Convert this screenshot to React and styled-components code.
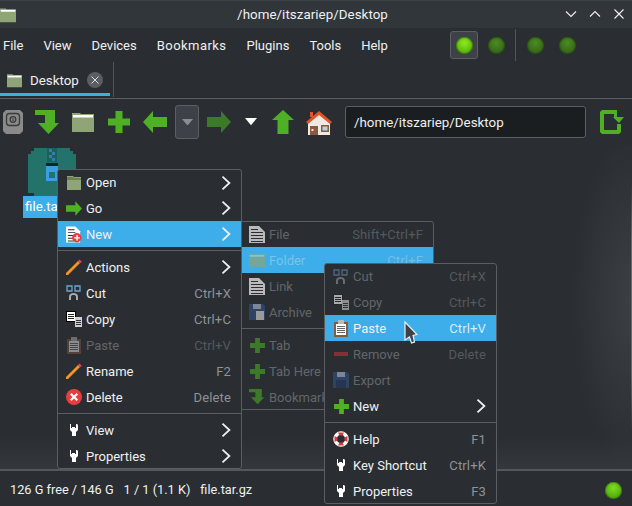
import React from 'react'
import styled, { createGlobalStyle } from 'styled-components'

const GREEN = '#4fb026'
const DIM_GREEN = '#3c7a2a'

const Global = createGlobalStyle`
html,body{margin:0;padding:0;background:#2a2e32;}
*{box-sizing:border-box;}
`

const FolderIcon = ({ size = 22, faded }) => (
  <svg width={size} height={size} viewBox="0 0 22 22" opacity={faded ? 0.7 : 1}>
    <path d="M0 2h8l1 1h13v18H0z" fill="#8fa477" />
    <path d="M1 4h20v2.500H1z" fill={faded ? '#9fd0c8' : '#fff'} />
  </svg>
)
const OpenFolder = () => (
  <svg width="16" height="16" viewBox="0 0 16 16">
    <path d="M1 1h6l1 1h7v13H1z" fill="#8fa477" />
    <path d="M1 2h6l1 1h7v2H1z" fill="#6c8052" />
  </svg>
)
const ArrowRight = ({ color = GREEN, w = 24, h = 22 }) => (
  <svg width={w} height={h} viewBox="0 0 24 22">
    <path d="M0 6h14V0l10 11-10 11v-6H0z" fill={color} />
  </svg>
)
const ArrowLeft = () => (
  <svg width="24" height="22" viewBox="0 0 24 22">
    <path d="M24 6H10V0L0 11l10 11v-6h14z" fill={GREEN} />
  </svg>
)
const ArrowUp = () => (
  <svg width="22" height="24" viewBox="0 0 22 24">
    <path d="M5.500 24V10H0L11 0l11 10h-5.500v14z" fill={GREEN} />
  </svg>
)
const TurnDown = ({ size = 25, color = GREEN }) => (
  <svg width={size} height={size} viewBox="0 0 25 25">
    <path d="M0 0h20v13h4L13.500 24 3 13h7V5H0z" fill={color} />
  </svg>
)
const Plus = ({ size = 22, color = GREEN }) => (
  <svg width={size} height={size} viewBox="0 0 22 22">
    <path d="M7.500 0h7v7.500H22v7h-7.500V22h-7v-7.500H0v-7h7.500z" fill={color} />
  </svg>
)
const DiskIcon = () => (
  <svg width="20" height="24" viewBox="0 0 20 24">
    <path d="M3 0h14l3 3v18l-3 3H3l-3-3V3z" fill="#8a8a8a" />
    <rect x="3.500" y="3.500" width="13" height="12" rx="3" fill="none" stroke="#3a3a3a" strokeWidth="1.300" />
    <circle cx="10" cy="9.500" r="2.800" fill="none" stroke="#3a3a3a" strokeWidth="1.300" />
    <path d="M9.500 8h1v3h-1z" fill="#3a3a3a" />
  </svg>
)
const HomeIcon = () => (
  <svg width="26" height="25" viewBox="0 0 26 25">
    <path d="M13 3l11 9v13H2V12z" fill="#eee9e2" />
    <path d="M4 2h3v5H4z" fill="#e0562a" />
    <path d="M0 12L13 1l13 11-2 2L13 5 2 14z" fill="#e0562a" />
    <path d="M4 16h8v9H4z" fill="#8c5a3c" />
    <path d="M15 15h8v7h-8z" fill="#8c5a3c" />
    <path d="M16.500 16.500h5v4h-5z" fill="#a9d8ee" />
    <path d="M5.500 19h2v2h-2z" fill="#eee9e2" />
  </svg>
)
const ReloadIcon = () => (
  <svg width="24" height="24" viewBox="0 0 24 24">
    <path d="M2 0h15v7h7l-5 6-6-6h1V4H4v16h13v-6h4v8l-2 2H2l-2-2V2z" fill={GREEN} />
  </svg>
)
const PageLines = ({ color = '#bbb' }) => (
  <svg width="16" height="17" viewBox="0 0 16 17">
    <path d="M0 0h10l6 6v11H0z" fill={color} />
    <path d="M2 3h7v1H2zM2 6h12v1H2zM2 9h12v1H2zM2 12h12v1H2zM2 15h12v1H2z" fill="#2a2e32" />
  </svg>
)
const NewDocIcon = () => (
  <svg width="17" height="17" viewBox="0 0 17 17">
    <path d="M0 0h10l5 5v12H0z" fill="#fff" />
    <path d="M2 3h7v1H2zM2 6h8v1H2zM2 9h6v1H2zM2 12h6v1H2zM2 15h7v1H2z" fill="#2a2e32" />
    <circle cx="11.500" cy="12" r="5" fill="#e93d3d" />
    <path d="M11 9h1.500v2.300h2.300v1.500h-2.300V15H11v-2.200H8.700v-1.500H11z" fill="#fff" />
  </svg>
)
const PencilIcon = () => (
  <svg width="16" height="16" viewBox="0 0 16 16">
    <path d="M0 14L12 2l2 2L2 16H0z" fill="#f7941e" />
    <path d="M12 2l1.500-1.500L16 3l-2 1z" fill="#ee3a7a" />
  </svg>
)
const ScissorsIcon = ({ faded }) => (
  <svg width="16" height="16" viewBox="0 0 16 16" opacity={faded ? 0.5 : 1}>
    <path d="M1 1h5v5H1zM9 1h5v5H9z" fill="none" stroke="#6aa6cf" strokeWidth="1.300" />
    <path d="M3 15v-3c0-3 2-4 4.500-4s4.500 1 4.500 4v3h-2v-3c0-1.500-1-2-2.500-2S5 10.500 5 12v3z" fill="#aaa" />
  </svg>
)
const CopyIcon = ({ faded }) => (
  <svg width="16" height="16" viewBox="0 0 16 16" opacity={faded ? 0.6 : 1}>
    <path d="M0 0h10v11H0z" fill={faded ? '#222' : '#000'} />
    <path d="M1 1h8v9H1z" fill="#fff" />
    <path d="M2 3h6v1H2zM2 5h6v1H2zM2 7h6v1H2z" fill="#222" />
    <path d="M9 6h7v10H9z" fill="#cfcfcf" />
    <path d="M10 9h5v1h-5zM10 11h5v1h-5zM10 13h5v1h-5z" fill="#333" />
  </svg>
)
const ClipIcon = ({ faded }) => (
  <svg width="16" height="17" viewBox="0 0 16 17" opacity={faded ? 0.45 : 1}>
    <path d="M1 2h14v15H1z" fill="#8a5a40" />
    <path d="M3 4h10v11H3z" fill="#fff" />
    <path d="M5 0h6v4H5z" fill="#bbb" />
    <path d="M4 6h8v1H4zM4 8h8v1H4zM4 10h8v1H4zM4 12h8v1H4z" fill="#666" />
  </svg>
)
const DeleteIcon = () => (
  <svg width="16" height="16" viewBox="0 0 16 16">
    <circle cx="8" cy="8" r="8" fill="#e93d3d" />
    <path d="M4 5.500L5.500 4 8 6.500 10.500 4 12 5.500 9.500 8l2.500 2.500-1.500 1.500L8 9.500 5.500 12 4 10.500 6.500 8z" fill="#fff" />
  </svg>
)
const WrenchIcon = () => (
  <svg width="16" height="16" viewBox="0 0 16 16">
    <path d="M4 2h1v4h1v-1h3v1h1V2h1l1 1v5l-2 2v4H6v-4L4 8z" fill="#fff" />
  </svg>
)
const FloppyIcon = ({ badge }) => (
  <svg width="16" height="16" viewBox="0 0 16 16">
    <path d="M0 0h14l2 2v14H0z" fill="#2f4363" />
    <path d="M4 0h8v5H4z" fill="#7c8696" />
    {badge ? <path d="M7 7h8v9H7z" fill="#9a9a9a" /> : <path d="M3 8h10v8H3z" fill="#263650" />}
  </svg>
)
const MinusIcon = () => (
  <svg width="16" height="16" viewBox="0 0 16 16">
    <path d="M1 6h14v4H1z" fill="#843036" />
  </svg>
)
const HelpIcon = () => (
  <svg width="16" height="16" viewBox="0 0 16 16">
    <circle cx="8" cy="8" r="6" fill="none" stroke="#fff" strokeWidth="3.500" />
    <path d="M5 1.500h6l-1.500 3h-3zM5 14.500h6l-1.500-3h-3zM1.500 5v6l3-1.500v-3zM14.500 5v6l-3-1.500v-3z" fill="#d63c3c" />
  </svg>
)
const Chevron = ({ size = 16 }) => (
  <svg width={size * 0.62} height={size} viewBox="0 0 10 16">
    <path d="M1.500 1.500L8.500 8l-7 6.500" fill="none" stroke="#eff0f1" strokeWidth="1.800" />
  </svg>
)
const Caret = ({ w = 12, color = '#fff' }) => (
  <svg width={w} height={w * 0.6} viewBox="0 0 10 6">
    <path d="M0 0h10L5 6z" fill={color} />
  </svg>
)
const WinGlyph = ({ d }) => (
  <svg width="12" height="12" viewBox="0 0 12 12">
    <path d={d} fill="none" stroke="#eff0f1" strokeWidth="1.100" />
  </svg>
)
const ArchiveIcon = () => (
  <svg width="48" height="48" viewBox="0 0 48 48">
    <path d="M6 0h36v3h3v3h3v39h-6v3H6v-3H0V6h3V3h3z" fill="#23736b" />
    <path d="M19 0h10v14H19z" fill="#1d5f59" />
    <path d="M21 1h3v3h-3zM24 4h3v3h-3zM21 7h3v3h-3zM24 10h3v3h-3z" fill="#2f7fb5" />
    <path d="M18 15h12v3H18z" fill="#10232e" />
    <path d="M18 18h12v15H18z" fill="#3b9ede" />
    <path d="M21 24h6v6h-6z" fill="#23736b" />
  </svg>
)
const PointerIcon = () => (
  <svg width="14" height="23" viewBox="0 0 14 23">
    <path d="M1 1l12 12.500-4 1 1.500 6.500-3 1-2-6-4.500 3z" fill="#3e4146" stroke="#eff0f1" strokeWidth="1.200" />
  </svg>
)

const items1 = [
  { label: 'Open', icon: <OpenFolder />, sub: true },
  { label: 'Go', icon: <ArrowRight w={16} h={15} />, sub: true },
  { label: 'New', icon: <NewDocIcon />, sub: true, active: true },
  'sep',
  { label: 'Actions', icon: <PencilIcon />, sub: true },
  { label: 'Cut', icon: <ScissorsIcon />, key: 'Ctrl+X' },
  { label: 'Copy', icon: <CopyIcon />, key: 'Ctrl+C' },
  { label: 'Paste', icon: <ClipIcon faded />, key: 'Ctrl+V', off: true },
  { label: 'Rename', icon: <PencilIcon />, key: 'F2' },
  { label: 'Delete', icon: <DeleteIcon />, key: 'Delete' },
  'sep',
  { label: 'View', icon: <WrenchIcon />, sub: true },
  { label: 'Properties', icon: <WrenchIcon />, sub: true },
]
const items2 = [
  { label: 'File', icon: <PageLines />, key: 'Shift+Ctrl+F', off: true },
  { label: 'Folder', icon: <FolderIcon size={16} faded />, key: 'Ctrl+F', off: true, active: true },
  { label: 'Link', icon: <PageLines />, off: true },
  { label: 'Archive', icon: <FloppyIcon badge />, off: true },
  'sep',
  { label: 'Tab', icon: <Plus size={15} color={DIM_GREEN} />, off: true },
  { label: 'Tab Here', icon: <Plus size={15} color={DIM_GREEN} />, off: true },
  { label: 'Bookmark', icon: <TurnDown size={16} color={DIM_GREEN} />, off: true },
]
const items3 = [
  { label: 'Cut', icon: <ScissorsIcon faded />, key: 'Ctrl+X', off: true },
  { label: 'Copy', icon: <CopyIcon faded />, key: 'Ctrl+C', off: true },
  { label: 'Paste', icon: <ClipIcon />, key: 'Ctrl+V', active: true },
  { label: 'Remove', icon: <MinusIcon />, key: 'Delete', off: true },
  { label: 'Export', icon: <FloppyIcon />, off: true },
  { label: 'New', icon: <Plus size={15} />, sub: true },
  'sep',
  { label: 'Help', icon: <HelpIcon />, key: 'F1' },
  { label: 'Key Shortcut', icon: <WrenchIcon />, key: 'Ctrl+K' },
  { label: 'Properties', icon: <WrenchIcon />, key: 'F3' },
]

const Menu = ({ items, $x, $y, $w }) => (
  <MenuBox $x={$x} $y={$y} $w={$w}>
    {items.map((it, i) =>
      it === 'sep' ? (
        <MenuSep key={i} />
      ) : (
        <MenuRow key={i} $active={it.active} $off={it.off}>
          <MenuIcon>{it.icon}</MenuIcon>
          <MenuLabel>{it.label}</MenuLabel>
          {it.key && <MenuKey $off={it.off} $active={it.active}>{it.key}</MenuKey>}
          {it.sub && <Chevron />}
        </MenuRow>
      )
    )}
  </MenuBox>
)

export default function App() {
  return (
    <Window>
      <Global />
      <TitleBar>
        <TitleIcon><FolderIcon size={16} /></TitleIcon>
        <TitleText>/home/itszariep/Desktop</TitleText>
        <WinButtons>
          <WinGlyph d="M1 3.500l5 5 5-5" />
          <WinGlyph d="M1 8.500l5-5 5 5" />
          <WinGlyph d="M1.500 1.500l9 9m0-9l-9 9" />
        </WinButtons>
      </TitleBar>
      <MenuBar>
        <MenuItems>
          {['File', 'View', 'Devices', 'Bookmarks', 'Plugins', 'Tools', 'Help'].map((m) => (
            <TopItem key={m} $wide={m === 'Bookmarks'}>{m}</TopItem>
          ))}
        </MenuItems>
        <Leds>
          <LedButton><Led $on /></LedButton>
          <LedSlot $ml={2}><Led /></LedSlot>
          <LedDivider />
          <LedSlot><Led /></LedSlot>
          <LedSlot><Led /></LedSlot>
        </Leds>
      </MenuBar>
      <TabBar>
        <Tab>
          <FolderIcon size={15} />
          <TabText>Desktop</TabText>
          <TabClose>
            <svg width="8" height="8" viewBox="0 0 8 8">
              <path d="M.5.500l7 7m0-7l-7 7" stroke="#ddd" strokeWidth="1" fill="none" />
            </svg>
          </TabClose>
        </Tab>
      </TabBar>
      <Toolbar>
        <ToolSlot $w={26}><DiskIcon /></ToolSlot>
        <ToolSlot $w={35} $ml={4}><TurnDown /></ToolSlot>
        <ToolSlot $w={36}><FolderIcon size={22} /></ToolSlot>
        <ToolSlot $w={36}><Plus /></ToolSlot>
        <ToolSlot $w={36}><ArrowLeft /></ToolSlot>
        <DropButton><Caret w={11} color="#8a8d91" /></DropButton>
        <ToolSlot $w={40}><ArrowRight color={DIM_GREEN} /></ToolSlot>
        <ToolSlot $w={24}><Caret /></ToolSlot>
        <ToolSlot $w={40}><ArrowUp /></ToolSlot>
        <ToolSlot $w={30} $ml={1}><HomeIcon /></ToolSlot>
        <PathInput>/home/itszariep/Desktop</PathInput>
        <ToolSlot $w={52}><ReloadIcon /></ToolSlot>
      </Toolbar>
      <Canvas>
        <FileItem>
          <ArchiveIcon />
          <FileName>file.tar.gz</FileName>
        </FileItem>
      </Canvas>
      <StatusBar>
        <span>126 G free / 146 G</span>
        <span>1 / 1 (1.1 K)</span>
        <span>file.tar.gz</span>
        <StatusLed />
      </StatusBar>
      <Menu items={items2} $x={240} $y={221} $w={194} />
      <Menu items={items1} $x={57} $y={169} $w={185} />
      <Menu items={items3} $x={324} $y={263} $w={173} />
      <Pointer><PointerIcon /></Pointer>
    </Window>
  )
}

const Window = styled.div`
position:relative;
width:632px;
height:506px;
overflow:hidden;
display:flex;
flex-direction:column;
background:#2a2e32;
color:#eff0f1;
font-family:"Roboto","Noto Sans",sans-serif;
font-size:13.33px;
`
const TitleBar = styled.div`
height:28px;
flex:none;
display:flex;
align-items:center;
justify-content:center;
position:relative;
background:#31363b;
border-top:1px solid #3d4249;
`
const TitleIcon = styled.div`
position:absolute;
left:0;
top:6px;
display:flex;
`
const TitleText = styled.div`
letter-spacing:.05px;
margin-right:7px;
`
const WinButtons = styled.div`
position:absolute;
right:7px;
top:7px;
display:flex;
gap:12px;
`
const MenuBar = styled.div`
height:34px;
flex:none;
display:flex;
align-items:center;
justify-content:space-between;
padding:0 49px 0 3px;
background:#2a2e32;
`
const MenuItems = styled.div`
display:flex;
gap:20px;
`
const TopItem = styled.span`
font-size:13px;
letter-spacing:${(p) => (p.$wide ? '.45px' : '0')};
`
const Leds = styled.div`
display:flex;
align-items:center;
`
const LedButton = styled.div`
width:28px;
height:28px;
display:flex;
align-items:center;
justify-content:center;
background:#3e4248;
border:1px solid #5b5f64;
border-radius:3px;
`
const LedSlot = styled.div`
width:32px;
height:28px;
margin-left:${(p) => p.$ml || 0}px;
display:flex;
align-items:center;
justify-content:center;
`
const LedDivider = styled.div`
width:1px;
height:32px;
background:#50555a;
margin:0 3px;
`
const Led = styled.div`
width:17px;
height:17px;
border-radius:50%;
box-shadow:inset 0 0 1px 1px rgba(20,50,5,.45);
background:${(p) => (p.$on ? 'radial-gradient(circle at 50% 35%,#8fe820,#57b80a 70%)' : 'radial-gradient(circle at 50% 35%,#4d8a22,#35651a 75%)')};
`
const TabBar = styled.div`
height:37px;
flex:none;
display:flex;
background:#2a2e32;
border-bottom:1px solid #5a5d61;
`
const Tab = styled.div`
width:110px;
height:34px;
display:flex;
align-items:center;
padding:5px 0 0 7px;
border-bottom:3px solid #3daee9;
margin-right:3px;
position:relative;
&::after{
content:"";
position:absolute;
right:-4px;
top:0;
width:1px;
height:35px;
background:#50555a;
}
`
const TabText = styled.span`
margin-left:8px;
`
const TabClose = styled.div`
width:16px;
height:16px;
margin-left:8px;
border-radius:50%;
background:#5a5d61;
display:flex;
align-items:center;
justify-content:center;
`
const Toolbar = styled.div`
height:46px;
flex:none;
display:flex;
align-items:center;
`
const ToolSlot = styled.div`
width:${(p) => p.$w}px;
margin-left:${(p) => p.$ml || 0}px;
flex:none;
display:flex;
align-items:center;
justify-content:center;
`
const DropButton = styled.div`
width:24px;
height:34px;
flex:none;
display:flex;
align-items:center;
justify-content:center;
background:#3e4248;
border:1px solid #5b5f64;
border-radius:3px;
margin-left:2px;
`
const PathInput = styled.div`
width:241px;
height:32px;
flex:none;
margin-left:11px;
padding-left:8px;
display:flex;
align-items:center;
background:#1b1e20;
border:1px solid #5b5f64;
border-radius:3px;
`
const Canvas = styled.div`
flex:1;
padding:3px 0 0 23px;
background:
  linear-gradient(to bottom,transparent 12%,#686b6f 30%,#686b6f 70%,transparent 88%) right / 1px 100% no-repeat,
  radial-gradient(ellipse 60px 170px at 100% 48%,#3c4044,transparent),
  linear-gradient(to bottom,transparent 90%,#34383c),
  #2a2e32;
`
const FileItem = styled.div`
width:58px;
display:flex;
flex-direction:column;
align-items:center;
`
const FileName = styled.div`
width:58px;
height:22px;
line-height:22px;
padding-left:2px;
background:#3daee9;
color:#fff;
white-space:nowrap;
overflow:hidden;
`
const StatusBar = styled.div`
height:37px;
flex:none;
display:flex;
align-items:center;
gap:10px;
padding:2px 0 0 10px;
position:relative;
font-size:12.75px;
background:#2a2e32;
border-top:2px solid #54575b;
`
const StatusLed = styled.div`
position:absolute;
right:10px;
top:11px;
width:17px;
height:17px;
border-radius:50%;
box-shadow:inset 0 0 1px 1px rgba(20,50,5,.35);
background:radial-gradient(circle at 50% 35%,#7fdc1e,#4da80c 75%);
`
const MenuBox = styled.div`
position:absolute;
left:${(p) => p.$x}px;
top:${(p) => p.$y}px;
width:${(p) => p.$w}px;
background:#2a2e32;
border:1px solid #5a5d61;
border-radius:3px;
font-size:13px;
`
const rowColor = (p) => {
  if (p.$off && p.$active) return '#7cc4ea'
  return p.$off ? '#62666a' : '#eff0f1'
}
const keyColor = (p) => {
  if (p.$active) return p.$off ? '#72bfe8' : '#d5ecf9'
  return p.$off ? '#55595d' : '#8f9296'
}
const MenuRow = styled.div`
height:26px;
display:flex;
align-items:center;
padding:0 10px 0 8px;
background:${(p) => (p.$active ? '#3daee9' : 'transparent')};
color:${rowColor};
&:first-child{
height:25px;
}
&:last-child{
margin-bottom:-1px;
}
`
const MenuIcon = styled.div`
width:16px;
height:18px;
flex:none;
display:flex;
align-items:center;
justify-content:center;
margin-right:4px;
`
const MenuLabel = styled.span`
flex:1;
white-space:nowrap;
`
const MenuKey = styled.span`
color:${keyColor};
white-space:nowrap;
letter-spacing:.15px;
`
const MenuSep = styled.div`
height:1px;
margin:3px 0;
background:#5a5d61;
`
const Pointer = styled.div`
position:absolute;
left:404px;
top:321px;
display:flex;
`
